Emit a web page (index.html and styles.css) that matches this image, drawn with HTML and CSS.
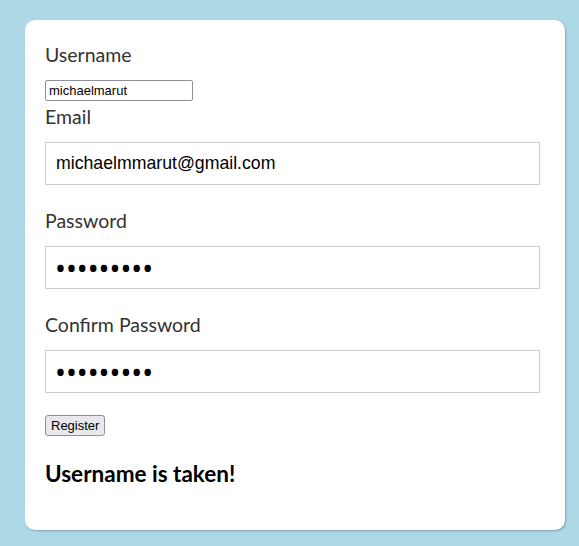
FILE: index.html
```html
<!DOCTYPE html>
<html>
<head>
<meta charset="utf-8">
<link rel="stylesheet" href="styles.css">
</head>
<body>
<div class="card">
  <form class="form">
    <label class="label" for="username">Username</label>
    <input class="plain-input" id="username" type="text" value="michaelmarut">
    <label class="label" for="email">Email</label>
    <input class="field" id="email" type="text" value="michaelmmarut@gmail.com">
    <label class="label" for="password">Password</label>
    <input class="field secret" id="password" type="password" value="123456789">
    <label class="label" for="confirm">Confirm Password</label>
    <input class="field secret" id="confirm" type="password" value="123456789">
    <div class="actions"><button class="btn" type="button">Register</button></div>
  </form>
  <h3 class="message">Username is taken!</h3>
</div>
</body>
</html>
```

FILE: styles.css
```css
html, body {
  margin: 0;
  padding: 0;
}
body {
  background: #add8e6;
  width: 579px;
  height: 546px;
  overflow: hidden;
  font-family: "Lato", "Open Sans", sans-serif;
}
.card {
  margin: 20px 0 0 25px;
  width: 540px;
  height: 510px;
  box-sizing: border-box;
  background: #fff;
  border-radius: 10px;
  box-shadow: 1px 1px 2px rgba(0,0,0,0.25);
  padding: 22px 25px 0 20px;
}
.form {
  display: flex;
  flex-direction: column;
  align-items: flex-start;
}
.label {
  display: block;
  font-size: 19.5px;
  line-height: 26px;
  color: #333;
  margin-bottom: 12px;
}
.plain-input {
  width: 148px;
  height: 21px;
  box-sizing: border-box;
  font-family: "Liberation Sans", Arial, sans-serif;
  font-size: 13px;
  padding: 1px 3px;
  border: 1px solid #8f8f9d;
  border-radius: 2px;
  margin: 0 0 3px 0;
}
.field {
  width: 495px;
  height: 43px;
  box-sizing: border-box;
  border: 1px solid #ccc;
  padding: 0 10px;
  font-family: "Liberation Sans", Arial, sans-serif;
  font-size: 17.7px;
  color: #000;
  margin: 0 0 23px 0;
}
.secret {
  font-family: "Noto Sans", sans-serif;
  font-size: 29px;
  padding-left: 9px;
}
.actions {
  margin-top: -2px;
}
.btn {
  font-family: "Liberation Sans", Arial, sans-serif;
  font-size: 13px;
  height: 21px;
  padding: 1px 5px;
  border: 1px solid #8f8f9d;
  border-radius: 3px;
  background: #e9e9ed;
  color: #000;
}
.message {
  margin: 24px 0 0 0;
  font-size: 22.5px;
  font-weight: 700;
  color: #000;
  line-height: 28px;
}
```
